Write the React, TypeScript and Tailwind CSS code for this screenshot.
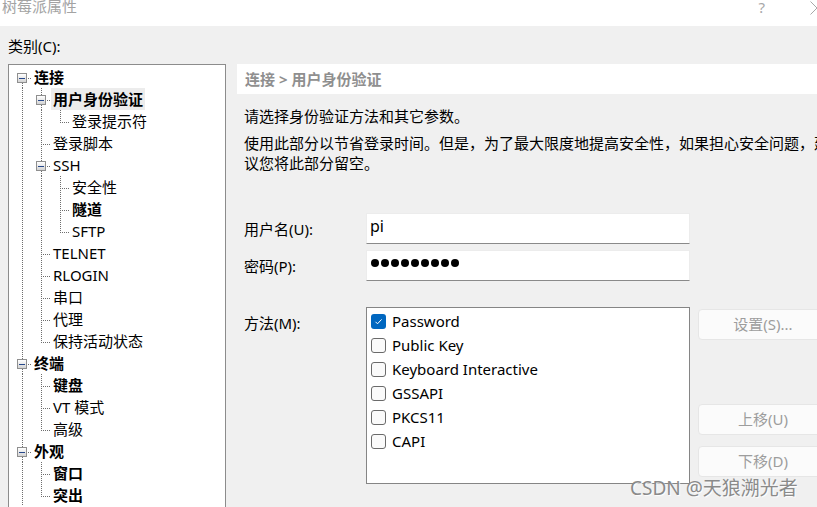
import React from "react";

type Own = { top: boolean; bottom: boolean; box: boolean };
type Row = {
  label: string;
  guides: boolean[];
  own: Own;
  bold?: boolean;
  selected?: boolean;
};

const mid = (box = false): Own => ({ top: true, bottom: true, box });
const last = (box = false): Own => ({ top: true, bottom: false, box });

const rows: Row[] = [
  { label: "连接", guides: [], own: { top: false, bottom: true, box: true }, bold: true },
  { label: "用户身份验证", guides: [true], own: mid(true), bold: true, selected: true },
  { label: "登录提示符", guides: [true, true], own: last() },
  { label: "登录脚本", guides: [true], own: mid() },
  { label: "SSH", guides: [true], own: mid(true) },
  { label: "安全性", guides: [true, true], own: mid() },
  { label: "隧道", guides: [true, true], own: mid(), bold: true },
  { label: "SFTP", guides: [true, true], own: last() },
  { label: "TELNET", guides: [true], own: mid() },
  { label: "RLOGIN", guides: [true], own: mid() },
  { label: "串口", guides: [true], own: mid() },
  { label: "代理", guides: [true], own: mid() },
  { label: "保持活动状态", guides: [true], own: last() },
  { label: "终端", guides: [], own: mid(true), bold: true },
  { label: "键盘", guides: [true], own: mid(), bold: true },
  { label: "VT 模式", guides: [true], own: mid() },
  { label: "高级", guides: [true], own: last() },
  { label: "外观", guides: [], own: mid(true), bold: true },
  { label: "窗口", guides: [true], own: mid(), bold: true },
  { label: "突出", guides: [true], own: last(), bold: true },
];

/* Dotted tree guides: 1px pixel dots via repeating gradients */
function VLine({ h }: { h: number }) {
  return (
    <div
      className="ml-[9px] w-[1px] shrink-0 bg-[repeating-linear-gradient(to_bottom,#6e6e6e_0px,#6e6e6e_1px,transparent_1px,transparent_2px)]"
      style={{ height: h }}
    />
  );
}

function HLine({ w, ml }: { w: number; ml: number }) {
  return (
    <div
      className="h-[1px] shrink-0 bg-[repeating-linear-gradient(to_right,#6e6e6e_0px,#6e6e6e_1px,transparent_1px,transparent_2px)]"
      style={{ width: w, marginLeft: ml }}
    />
  );
}

function Pipe({ on }: { on: boolean }) {
  return <div className="w-[19px] h-[22px] shrink-0">{on && <VLine h={22} />}</div>;
}

function OwnCell({ own }: { own: Own }) {
  const { top, bottom, box } = own;
  if (box) {
    return (
      <div className="w-[19px] h-[22px] shrink-0 flex flex-col">
        <div className="h-[7px]">{top && <VLine h={7} />}</div>
        <div className="h-[10px] flex items-center">
          <div className="ml-[4px] w-[10px] h-[10px] border border-[#8f8f8f] bg-gradient-to-b from-white to-[#d4d4d4] flex items-center justify-center shrink-0">
            <div className="w-[6px] h-[1px] bg-[#27488a]" />
          </div>
          <HLine w={4} ml={1} />
        </div>
        <div className="h-[5px]">{bottom && <VLine h={5} />}</div>
      </div>
    );
  }
  return (
    <div className="w-[19px] h-[22px] shrink-0 flex flex-col">
      <div className="h-[12px]">{top && <VLine h={12} />}</div>
      <div className="flex h-[1px]">
        {top ? <HLine w={9} ml={9} /> : null}
      </div>
      <div className="h-[9px]">{bottom && <div className="ml-[9px] w-[1px] h-[9px] bg-[repeating-linear-gradient(to_bottom,transparent_0px,transparent_1px,#6e6e6e_1px,#6e6e6e_2px)]" />}</div>
    </div>
  );
}

function Check({ checked, label }: { checked?: boolean; label: string }) {
  return (
    <div className="flex items-center h-[24px]">
      {checked ? (
        <div className="w-[15px] h-[15px] rounded-[3px] bg-[#0067c0] flex items-center justify-center shrink-0">
          <svg width={11} height={11} viewBox="0 0 11 11">
            <path d="M2.5 5.8 L4.5 7.8 L8.6 3.4" fill="none" stroke="#fff" strokeWidth={1} />
          </svg>
        </div>
      ) : (
        <div className="w-[15px] h-[15px] rounded-[3px] border border-[#6a6a6a] bg-[#fafafa] shrink-0" />
      )}
      <span className="ml-[6px] leading-[20px]">{label}</span>
    </div>
  );
}

function Btn({ label, className }: { label: string; className?: string }) {
  return (
    <div
      className={`w-[130px] h-[31px] rounded-[4px] border border-[#e6e6e6] bg-[#fbfbfb] text-[#9d9d9d] flex items-center justify-center ${className ?? ""}`}
    >
      {label}
    </div>
  );
}

export default function App() {
  return (
    <div className="relative w-[817px] h-[507px] overflow-hidden bg-[#f0f0f0] text-black text-[15px] font-['Noto_Sans','Noto_Sans_CJK_SC',sans-serif]">
      {/* title bar */}
      <div className="flex h-[26px] bg-white overflow-visible">
        <div className="pl-[2px] mt-[-4px] leading-[20px] text-[#a3a3a3]">树莓派属性</div>
        <div className="ml-auto mt-[-3px] leading-[20px] text-[#a8a8a8]">?</div>
        <svg width={14} height={14} className="ml-[45px] mr-[-7px] mt-[1px] shrink-0">
          <line x1={0.5} y1={0.5} x2={13.5} y2={13.5} stroke="#a8a8a8" />
          <line x1={13.5} y1={0.5} x2={0.5} y2={13.5} stroke="#a8a8a8" />
        </svg>
      </div>

      <div className="flex">
        {/* left: category tree */}
        <div className="pl-[8px] shrink-0">
          <div className="h-[38px] pt-[2px] flex items-center leading-[20px]">类别(C):</div>
          <div className="w-[218px] h-[460px] border border-[#8c8c8c] bg-white pt-[1px] pl-[4px]">
            {rows.map((r, i) => (
              <div key={i} className="flex h-[22px]">
                {r.guides.map((g, j) => (
                  <Pipe key={j} on={g} />
                ))}
                <OwnCell own={r.own} />
                <span
                  className={`px-[2px] leading-[22px] whitespace-nowrap ${r.bold ? "font-bold" : ""} ${
                    r.selected ? "bg-[#ececec]" : ""
                  }`}
                >
                  {r.label}
                </span>
              </div>
            ))}
          </div>
        </div>

        {/* right panel */}
        <div className="ml-[11px] flex-1 min-w-0 pt-[38px]">
          <div className="h-[30px] bg-white pl-[8px] flex items-center font-bold text-[#8f8f8f] leading-[20px]">
            连接 &gt; 用户身份验证
          </div>
          <div className="pl-[7px] mt-[12px] leading-[20px] whitespace-nowrap">请选择身份验证方法和其它参数。</div>
          <div className="pl-[7px] mt-[7px] leading-[20px] whitespace-nowrap">
            <div>使用此部分以节省登录时间。但是，为了最大限度地提高安全性，如果担心安全问题，建</div>
            <div>议您将此部分留空。</div>
          </div>

          <div className="mt-[40px] pl-[7px] flex flex-col">
            <div className="flex h-[31px] items-center">
              <div className="w-[122px] shrink-0 leading-[20px]">用户名(U):</div>
              <div className="w-[324px] shrink-0 h-[31px] bg-white border border-[#ececec] border-b-[#8a8a8a] pl-[3px] text-[16px] leading-[22px] pt-[1px]">
                pi
              </div>
            </div>
            <div className="flex h-[31px] items-center mt-[6px]">
              <div className="w-[122px] shrink-0 leading-[20px]">密码(P):</div>
              <div className="w-[324px] shrink-0 h-[31px] bg-white border border-[#ececec] border-b-[#8a8a8a] pl-[4px] flex items-start pt-[8px] gap-[2px]">
                {Array.from({ length: 9 }).map((_, i) => (
                  <div key={i} className="w-[8px] h-[8px] rounded-full bg-black" />
                ))}
              </div>
            </div>
            <div className="flex items-start mt-[26px]">
              <div className="w-[122px] shrink-0 mt-[6px] leading-[20px]">方法(M):</div>
              <div className="w-[324px] h-[177px] bg-white border border-[#858585] pt-[1px] pl-[4px] shrink-0">
                <Check checked label="Password" />
                <Check label="Public Key" />
                <Check label="Keyboard Interactive" />
                <Check label="GSSAPI" />
                <Check label="PKCS11" />
                <Check label="CAPI" />
              </div>
              <div className="ml-[8px] flex flex-col shrink-0">
                <Btn label="设置(S)..." className="mt-[2px]" />
                <Btn label="上移(U)" className="mt-[64px]" />
                <Btn label="下移(D)" className="mt-[11px]" />
              </div>
            </div>
          </div>
        </div>
      </div>

      {/* watermark */}
      <div className="absolute left-[630px] top-[476px] leading-[24px] text-[19px] text-[#8a8a8a] whitespace-nowrap [text-shadow:1px_1px_1px_#ffffff]">
        CSDN @天狼溯光者
      </div>
    </div>
  );
}
